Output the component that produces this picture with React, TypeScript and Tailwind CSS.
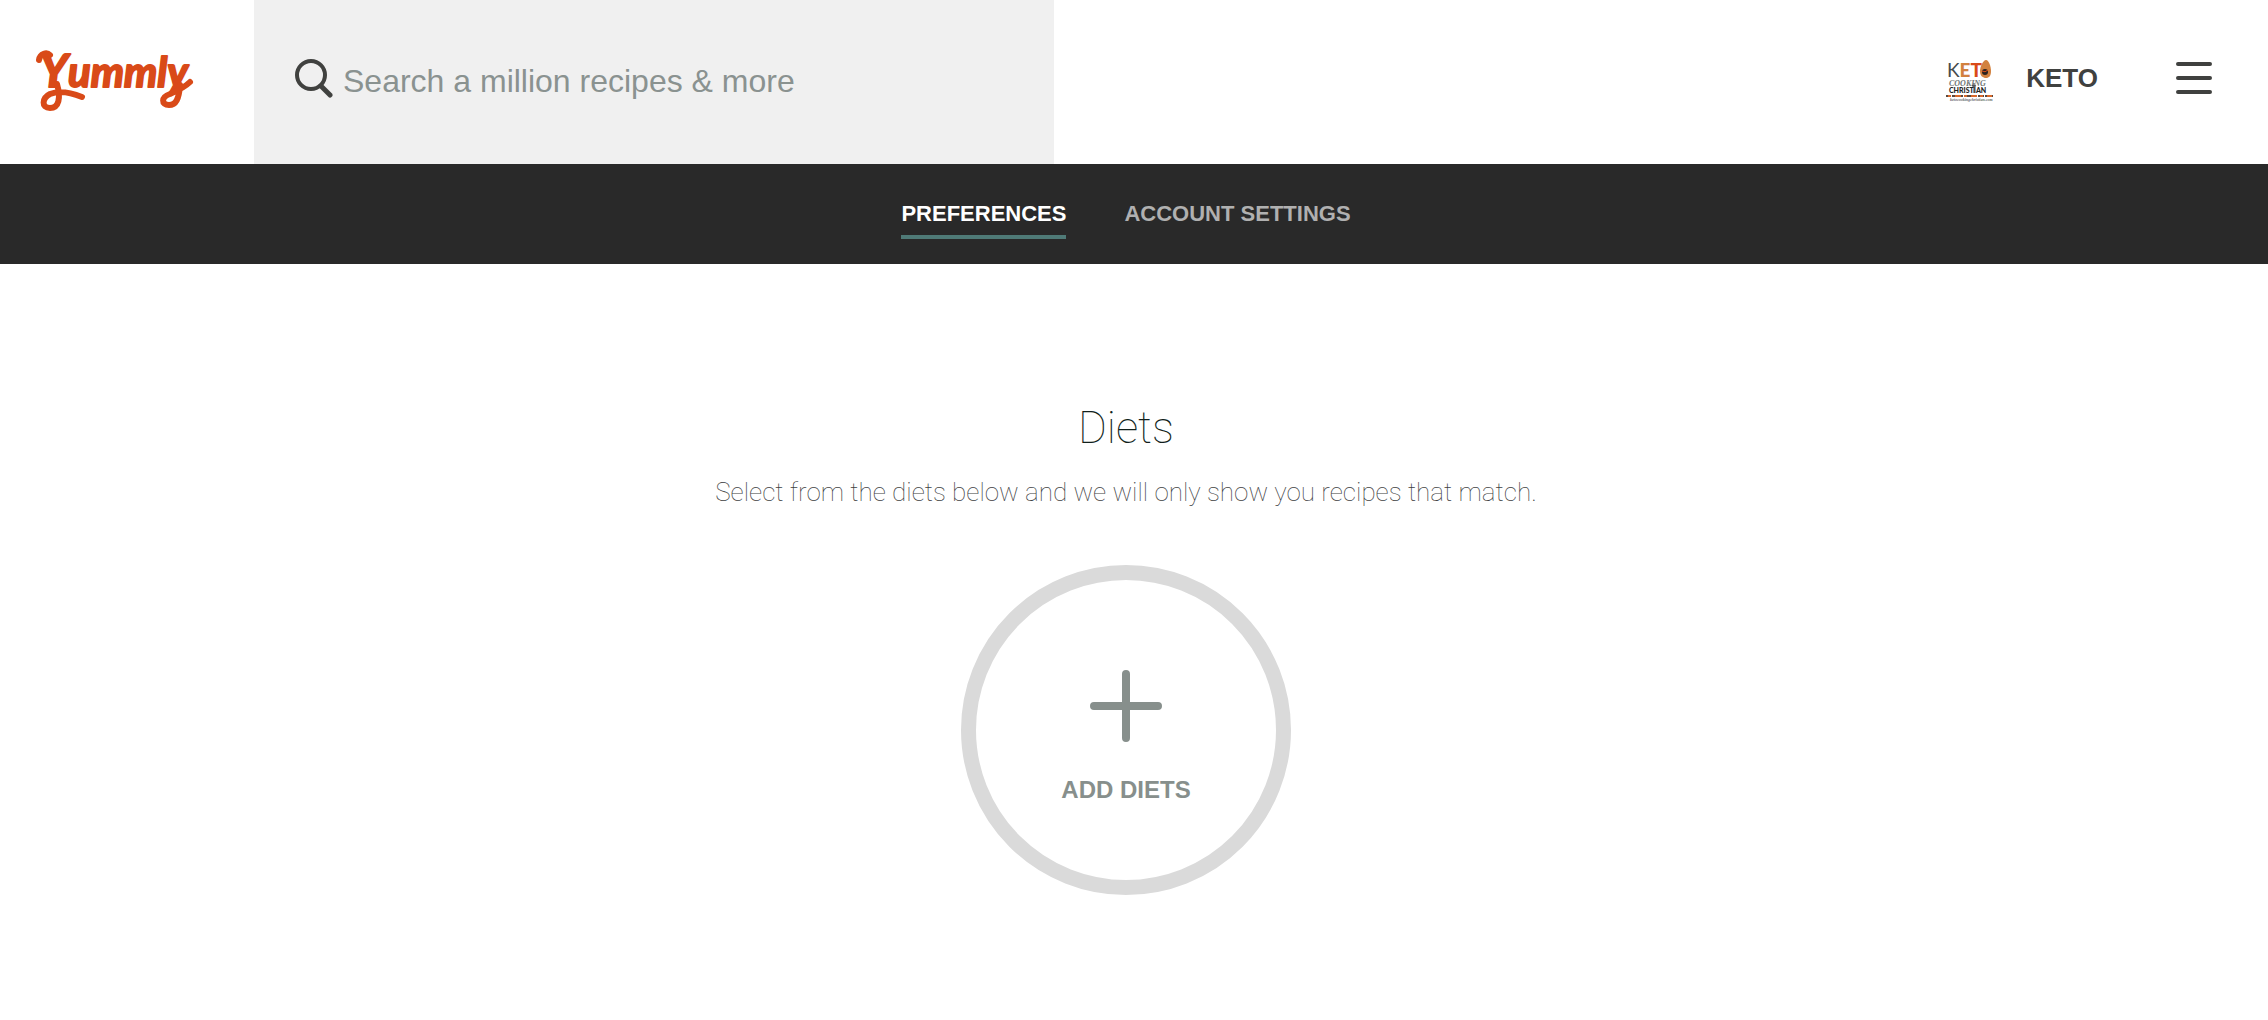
import { clsx } from "clsx";

const tabs = [
  { label: "PREFERENCES", href: "#preferences", active: true },
  { label: "ACCOUNT SETTINGS", href: "#account", active: false },
];

function Logo() {
  return (
    <svg width="160" height="62" viewBox="0 0 160 62" fill="#d94a18" stroke="#d94a18" strokeLinecap="round" strokeLinejoin="round" className="overflow-visible">
      <text x="4" y="36" strokeWidth="2" className="font-['Lato',sans-serif] text-[42px] font-bold italic">
        <tspan className="text-[46px]">Y</tspan>ummly
      </text>
      <g fill="none" strokeWidth="6">
        <path d="M3 9C4 2 11 1 14 4" />
        <path d="M21 33C25 47 23 57 14 57C5 57 6 47 14 43C24 39 36 42 46 46" />
        <path d="M144 34C143 48 140 54 133 54C125 54 125 46 134 43C143 39 150 35 154 31" />
      </g>
    </svg>
  );
}

function SearchIcon() {
  return (
    <svg width="38" height="40" viewBox="0 0 38 40" fill="none" stroke="#40413f" strokeWidth="4" strokeLinecap="round" className="mb-2 shrink-0">
      <circle cx="16" cy="17" r="14" />
      <path d="M26 28L35 37" strokeWidth="5" />
    </svg>
  );
}

function Avatar() {
  return (
    <svg width="50" height="48" viewBox="0 0 50 48" className="shrink-0">
      <text x="1" y="23" className="font-['Lato',sans-serif] text-[19px] font-black">
        <tspan fill="#454b4c" className="font-normal">K</tspan>
        <tspan fill="#d2813f">E</tspan>
        <tspan fill="#d94a18">T</tspan>
      </text>
      <path d="M40 6C43 6 45 13 45 17C45 22 43 24 40 24C37 24 34 22 34 17C34 13 37 6 40 6Z" fill="#d2813f" />
      <circle cx="39" cy="18" r="3" fill="#2b2320" />
      <path d="M36 17Q39 19 42 16" fill="none" stroke="#d94a18" />
      <text x="3" y="32" fill="#6f7675" className="font-['Liberation_Serif',serif] text-[8px] italic">COOKING</text>
      <text x="3" y="39" fill="#222" className="font-['Lato',sans-serif] text-[7px] font-black">CHRISTIAN</text>
      <path d="M28 29V39M26 32H30" stroke="#333" />
      <path d="M0 42H47" stroke="#5a4a40" strokeWidth="2" strokeDasharray="4 2 6 1" />
      <path d="M2 42H46" stroke="#d9692b" strokeWidth="2" strokeDasharray="3 4 6 3" />
      <text x="4" y="47" fill="#666" className="font-['Liberation_Serif',serif] text-[4px] italic">ketocookingchristian.com</text>
    </svg>
  );
}

function MenuIcon() {
  return (
    <svg width="36" height="32" viewBox="0 0 36 32" stroke="#40413f" strokeWidth="4" strokeLinecap="round">
      <path d="M2 2H34M2 16H34M2 30H34" />
    </svg>
  );
}

function Header() {
  return (
    <header className="flex h-41 items-stretch">
      <a href="#home" aria-label="Yummly" className="flex w-[254px] shrink-0 items-center pl-9">
        <Logo />
      </a>
      <label className="flex w-[800px] items-center bg-[#f0f0f0] pl-[41px]">
        <SearchIcon />
        <input
          type="search"
          aria-label="Search"
          placeholder="Search a million recipes & more"
          className="mb-0.5 ml-2.5 min-w-0 flex-1 bg-transparent text-[32px] leading-10 text-[#40413f] outline-none placeholder:text-[#8a9290] placeholder:opacity-100"
        />
      </label>
      <div className="ml-auto flex items-center pr-14 pb-2">
        <a href="#profile" className="flex items-center gap-[30px] text-[26px] leading-8 font-bold text-[#40413f]">
          <Avatar />
          KETO
        </a>
        <button type="button" aria-label="Menu" className="ml-[78px]">
          <MenuIcon />
        </button>
      </div>
    </header>
  );
}

function SettingsNav() {
  return (
    <nav className="flex justify-center gap-[58px] bg-[#292929] pt-9 pr-4 pb-[25px]">
      {tabs.map((tab) => (
        <a
          key={tab.label}
          href={tab.href}
          className={clsx(
            "border-b-4 pb-[7px] text-[22px] leading-7 font-bold",
            tab.active ? "border-[#4f7a77] text-white" : "border-transparent text-[#b0b0b0]",
          )}
        >
          {tab.label}
        </a>
      ))}
    </nav>
  );
}

function Diets() {
  return (
    <section className="flex flex-col items-center pt-34 pr-4 pb-31">
      <h1 className="font-['Roboto',sans-serif] text-[44px] leading-14 font-thin text-[#111f1b]">Diets</h1>
      <p className="mt-[18px] font-['Roboto',sans-serif] text-[26px] leading-9 font-thin text-[#40413f]">
        Select from the diets below and we will only show you recipes that match.
      </p>
      <button
        type="button"
        className="mt-[55px] flex size-[330px] flex-col items-center rounded-full border-[15px] border-[#dadada] pt-[90px] text-2xl leading-8 font-bold text-[#878f8c]"
      >
        <svg width="72" height="72" viewBox="0 0 72 72" stroke="currentColor" strokeWidth="8" strokeLinecap="round" className="shrink-0">
          <path d="M36 4V68M4 36H68" />
        </svg>
        <span className="mt-8">ADD DIETS</span>
      </button>
    </section>
  );
}

export default function App() {
  return (
    <div className="min-h-screen bg-white font-['Liberation_Sans',sans-serif]">
      <Header />
      <SettingsNav />
      <main>
        <Diets />
      </main>
    </div>
  );
}
